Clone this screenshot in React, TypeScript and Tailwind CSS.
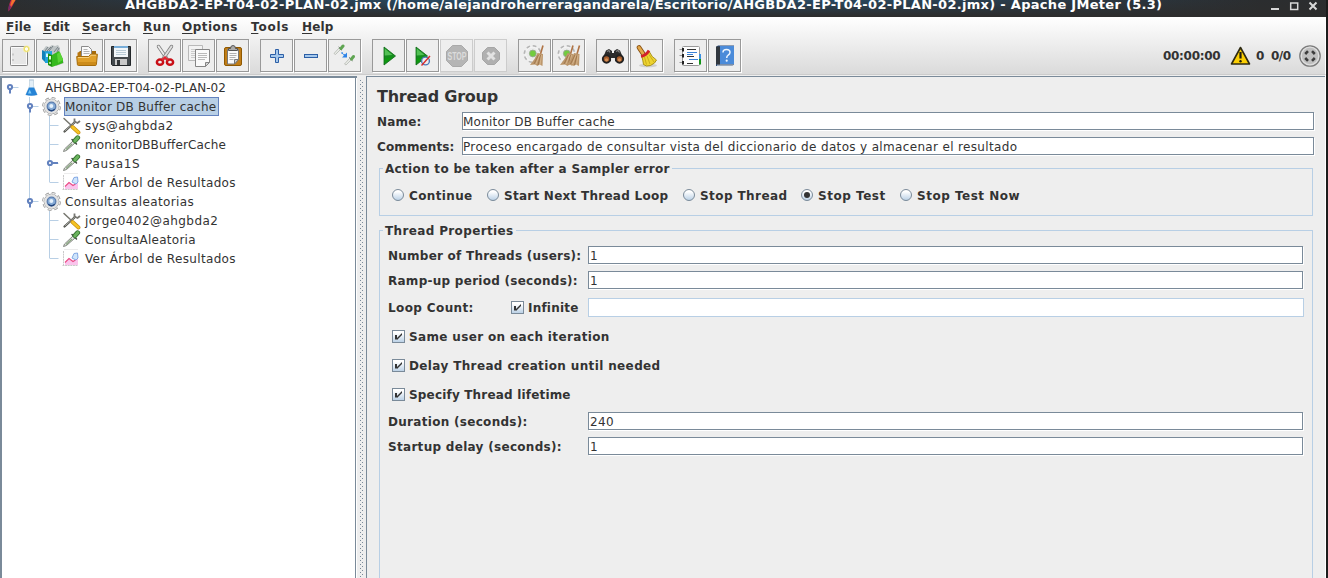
import React, { ReactNode } from "react";

/* ---------- toolbar icons (24 x 24) ---------- */

const Svg = ({ children }: { children: ReactNode }) => (
  <svg width="24" height="24" viewBox="0 0 24 24" className="block shrink-0">{children}</svg>
);

const NewIcon = () => (
  <Svg>
    <rect x="3.500" y="2.500" width="17" height="19" rx="0.800" fill="#ededed" stroke="#858585" />
    <rect x="4.500" y="3.500" width="15" height="17" fill="#e6e6e6" stroke="#fafafa" />
    <path d="M6 9.500v2M6 15v2" stroke="#aaa" />
    <circle cx="19.500" cy="5" r="3.600" fill="#f7ee9d" opacity="0.800" />
    <circle cx="19.500" cy="5" r="2.300" fill="#fffdf0" stroke="#eadc52" />
  </Svg>
);

const TemplatesIcon = () => (
  <Svg>
    <path d="M13 19l9-2 1 2-8 3z" fill="#b5b5b5" />
    <path d="M2 6l3-4 3 1 3-2 3 1 3-1 2 3v7l-9 5-8-4z" fill="#bfc5c6" />
    <path d="M4 7l3-4M8 7l4-5M13 8l4-5M6 7l4-4M16 8l2-4" stroke="#707b80" strokeWidth="0.900" />
    <path d="M1 6l3 1.500L7 7v12l-3-1-3-3z" fill="#1280b8" />
    <path d="M4 7.500L11 7v12H4z" fill="#21a3dc" />
    <path d="M7 9.500l4 1.500v12l-4-2z" fill="#1f930f" />
    <path d="M11 11l7-4 4 8v4l-11 4z" fill="#35b91d" />
    <path d="M16 10l3-2 3 8-5 3z" fill="#59d435" />
    <rect x="5" y="9.500" width="2" height="3.500" fill="#d8f5ff" />
    <rect x="8" y="12" width="2" height="3.500" fill="#d9ffd0" />
    <circle cx="9" cy="19" r="0.900" fill="#e2ffdc" />
  </Svg>
);

const OpenIcon = () => (
  <Svg>
    <path d="M3 9l2-2h16v6H3z" fill="#a66b0a" />
    <path d="M2.500 8.500h4l1-2h3v14h-8z" fill="#b9770f" />
    <path d="M6.500 2.500h7l3 3v9h-10z" fill="#fafafa" stroke="#8a8a8a" />
    <path d="M8.500 5.500h4M8.500 7.500h6M8.500 9.500h6" stroke="#b3b3b3" />
    <path d="M1.700 12.500h12l2-2.300h6.700l-1 10.300q-.1 1-1.200 1H3.500q-1 0-1.100-1z" fill="#e0a02a" stroke="#a56c0c" />
    <path d="M3 13.500h11l2-2.300h5" fill="none" stroke="#f7d07d" />
    <path d="M2.700 18h18.500l-.4 3H3z" fill="#c17f13" opacity="0.650" />
  </Svg>
);

const SaveIcon = () => (
  <Svg>
    <path d="M2.500 2.500h19v19h-18l-1-1z" fill="#444a4e" stroke="#222629" />
    <rect x="5" y="2" width="14" height="11" fill="#f2f7fa" />
    <rect x="5" y="2" width="14" height="2" fill="#79aed9" />
    <path d="M7 6.500h10M7 8.500h10M7 10.500h10" stroke="#b9cbd6" />
    <rect x="6" y="15" width="12" height="6" fill="#c9c9c9" />
    <rect x="8" y="16" width="3" height="5" fill="#33373a" />
  </Svg>
);

const CutIcon = () => (
  <Svg>
    <path d="M5.500 2.500L14 15" stroke="#7d7d7d" strokeWidth="3.400" strokeLinecap="round" />
    <path d="M5.500 2.500L14 15" stroke="#ececec" strokeWidth="1.900" strokeLinecap="round" />
    <path d="M18.500 2.500L10 15" stroke="#7d7d7d" strokeWidth="3.400" strokeLinecap="round" />
    <path d="M18.500 2.500L10 15" stroke="#dedede" strokeWidth="1.900" strokeLinecap="round" />
    <ellipse cx="7" cy="18.200" rx="3.100" ry="2.600" fill="none" stroke="#c90f17" strokeWidth="2.500" />
    <ellipse cx="17" cy="18.200" rx="3.100" ry="2.600" fill="none" stroke="#c90f17" strokeWidth="2.500" />
    <path d="M9 16l3-2.500 3 2.500" fill="none" stroke="#df2731" strokeWidth="2.300" />
  </Svg>
);

const CopyIcon = () => (
  <Svg>
    <path d="M1.500 1.500h14v15h-14z" fill="#f3f3f3" stroke="#b9b9b9" />
    <path d="M4 5.500h9M4 7.500h9M4 9.500h4M4 11.500h4M4 13.500h4" stroke="#ccc" />
    <path d="M8.500 5.500h14v13l-4 4h-10z" fill="#fafafa" stroke="#858585" />
    <path d="M11 9.500h9M11 11.500h9M11 13.500h9M11 15.500h7" stroke="#b9b9b9" />
    <path d="M22.500 18.500h-4v4z" fill="#d4d4d4" stroke="#858585" />
  </Svg>
);

const PasteIcon = () => (
  <Svg>
    <rect x="3.500" y="3.500" width="17" height="18" rx="1.500" fill="#c17d16" stroke="#8f5902" />
    <path d="M6.500 5.500h11v10l-4 4.500h-7z" fill="#fafafa" stroke="#777" />
    <path d="M17.500 15.500h-4v4.500z" fill="#ccc" stroke="#777" />
    <path d="M8.500 9.500h7M8.500 11.500h7M8.500 13.500h6M8.500 15.500h4" stroke="#b0b0b0" />
    <path d="M7.500 6.500v-2h2q0-3 2.500-3t2.500 3h2v2z" fill="#aaa" stroke="#555" />
  </Svg>
);

const PlusIcon = () => (
  <Svg>
    <path d="M10.500 5.500h3v5h5v3h-5v5h-3v-5h-5v-3h5z" fill="#a5c8ec" stroke="#2c5fa6" strokeLinejoin="round" />
  </Svg>
);

const MinusIcon = () => (
  <Svg>
    <rect x="5.500" y="10.500" width="13" height="3" fill="#a5c8ec" stroke="#2c5fa6" />
  </Svg>
);

const Dropper = ({ x, y }: { x: number; y: number }) => (
  <g transform={`translate(${x} ${y})`}>
    <path d="M1 9.500l5-5.500 1.500 1.500-5 5z" fill="#e9ebe7" stroke="#b4b7b1" strokeWidth="0.800" />
    <path d="M5.700 3L9 6.300" stroke="#4d5a4d" strokeWidth="1" />
    <path d="M8 4.500l2-2.500" stroke="#5fa552" strokeWidth="3" strokeLinecap="round" />
  </g>
);

const ToggleIcon = () => (
  <Svg>
    <Dropper x={0} y={0} />
    <Dropper x={10.500} y={10.500} />
    <path d="M8.500 8.500l4 3.500" stroke="#2d83e8" strokeWidth="1.500" strokeDasharray="1.800 .8" />
    <path d="M14 8.500v5h-5z" fill="#2d83e8" />
  </Svg>
);

const Play = () => (
  <>
    <path d="M7 3v18l11.500-9z" fill="#168c1f" stroke="#0d6a14" strokeWidth="0.800" />
    <path d="M7.700 4.500v7l7.800-.5z" fill="#52c054" />
    <path d="M7.700 19.500l9-7.300-9 2.500z" fill="#0f9a10" />
  </>
);

const StartIcon = () => <Svg><Play /></Svg>;

const StartNoTimersIcon = () => (
  <Svg>
    <g transform="translate(-2 0)"><Play /></g>
    <circle cx="14.500" cy="17" r="3.900" fill="#eee" stroke="#4b79ba" strokeWidth="1.400" />
    <path d="M10.500 21.500l8.500-9.500" stroke="#d92c2c" strokeWidth="1.400" />
  </Svg>
);

const StopIcon = () => (
  <Svg>
    <path d="M7.500 1.500h9l6 6v9l-6 6h-9l-6-6v-9z" fill="#b5b5b5" stroke="#a9a9a9" />
    <text x="12" y="15.500" textAnchor="middle" textLength="19" lengthAdjust="spacingAndGlyphs" fontFamily="Liberation Sans" fontWeight="bold" fontSize="10" fill="#dcdcdc">STOP</text>
  </Svg>
);

const ShutdownIcon = () => (
  <Svg>
    <path d="M8.500 3.500h7l5 5v7l-5 5h-7l-5-5v-7z" fill="#b0b0b0" stroke="#a6a6a6" />
    <path d="M8.500 8.500l7 7M15.500 8.500l-7 7" stroke="#e2e2e2" strokeWidth="3" />
  </Svg>
);

const Cog = () => (
  <>
    <circle cx="9.500" cy="10" r="7.300" fill="none" stroke="#b5b5b5" strokeWidth="3.400" strokeDasharray="3.300 2.434" />
    <circle cx="9.500" cy="10" r="6.800" fill="#ececec" stroke="#f4f4f4" strokeWidth="1.200" />
    <circle cx="9.800" cy="9.500" r="3.400" fill="#72cc3e" stroke="#9aa894" strokeWidth="0.900" />
  </>
);

const Broom = ({ x = 0 }: { x?: number }) => (
  <g transform={`translate(${x} 0)`}>
    <path d="M20 1.500L17.500 10" stroke="#b07446" strokeWidth="1.600" />
    <path d="M14.500 9l5.500 1-.5 12-3-1.500-2 1.500-2.500-1.500-5 .5q5-5.500 7.500-12z" fill="#bc976c" />
    <path d="M15.500 11l-4.500 9M17.500 11l-2.500 10" stroke="#94693e" strokeWidth="0.700" />
    <path d="M16.500 11l-3.500 9M18.500 11l-1.500 10" stroke="#dfbf96" strokeWidth="0.700" />
  </g>
);

const ClearIcon = () => <Svg><Cog /><Broom /></Svg>;
const ClearAllIcon = () => <Svg><Cog /><Broom x={-4} /><Broom x={2.500} /></Svg>;

const SearchIcon = () => (
  <Svg>
    <path d="M5 6.500l3-1.500 3 2v2h2V7l3-2 3 1.500 3.500 8.500-4.500 4-4-2v-3h-4v3l-4 2-4.500-4z" fill="#2b2b2b" />
    <path d="M6 7.500l2-1 1 2M15 7.500l2-1 1.500 2" stroke="#858585" strokeWidth="1.200" fill="none" />
    <circle cx="5.500" cy="15" r="3.700" fill="#a65b2a" stroke="#222" strokeWidth="1.900" />
    <circle cx="18.500" cy="15" r="3.700" fill="#a65b2a" stroke="#222" strokeWidth="1.900" />
    <circle cx="5.500" cy="15.800" r="1.600" fill="#d39159" />
    <circle cx="18.500" cy="15.800" r="1.600" fill="#d39159" />
  </Svg>
);

const ResetSearchIcon = () => (
  <Svg>
    <ellipse cx="13" cy="21.500" rx="9" ry="1.800" fill="#cfcfcf" />
    <path d="M4 3.500l4 6" stroke="#8a5212" strokeWidth="4.800" strokeLinecap="round" />
    <path d="M4 3.500l4 6" stroke="#e3a84a" strokeWidth="3" strokeLinecap="round" />
    <path d="M7 13l7.500-5q2 5 7 8l-2 3-4 2.500-4 .5-3-1.500Q8 17 7 13z" fill="#edd32f" stroke="#a38a0d" strokeWidth="0.900" />
    <path d="M9.500 13l2 7.500M12 12l3 8M14 10.500l5 7.500" stroke="#c4a81a" strokeWidth="0.900" />
    <path d="M6 12.500q5-1 8-6" fill="none" stroke="#d3202a" strokeWidth="2.800" />
  </Svg>
);

const FunctionIcon = () => (
  <Svg>
    <rect x="3.500" y="2.500" width="17" height="19" rx="1" fill="#fdfdfd" stroke="#9a9a9a" />
    <rect x="20" y="10" width="2" height="5" fill="#3b8fe0" />
    <rect x="20" y="15" width="2" height="5.500" fill="#129318" />
    <path d="M8 5.500h9M8 12.500h7M8 19.500h6" stroke="#333" />
    <path d="M8 8.500h10M10 15.500h9M8 10.500h6" stroke="#3982d8" />
    {[5, 11, 18].map((y) => (
      <g key={y}>
        <path d={`M0.500 ${y + 0.500}h3`} stroke="#999" />
        <rect x="3" y={y - 1} width="2" height="3.500" fill="#222" />
      </g>
    ))}
  </Svg>
);

const HelpIcon = () => (
  <Svg>
    <path d="M3 3l2-1.500h16v18.500l-1.500 2H3z" fill="#2a4a78" />
    <path d="M4 20.500h16v1.200H4z" fill="#cfd4da" />
    <rect x="7" y="2" width="14" height="18" fill="#4b8bd9" />
    <rect x="3" y="2.500" width="4" height="18" fill="#30363e" />
    <path d="M10 8.500q0-3 3.500-3t3.500 2.800q0 1.700-1.700 2.700-1.600 1.100-1.600 3" fill="none" stroke="#eef6ff" strokeWidth="1.500" />
    <circle cx="13.700" cy="16.700" r="1.100" fill="#eef6ff" />
  </Svg>
);

/* ---------- tree icons (20 x 19) ---------- */

type NodeKind = "plan" | "threads" | "config" | "sampler" | "listener";

const NodeIcon = ({ kind }: { kind: NodeKind }) => (
  <svg width="20" height="19" viewBox="0 0 20 19" className="block shrink-0">
    {kind === "plan" && (
      <>
        <path d="M5.500 2v6L1.800 17h11.400L9.500 8V2z" fill="#e3eff8" stroke="#c3d3df" strokeWidth="0.800" />
        <path d="M5 9.500h5l3.300 7.300q-5.800 2-11.600 0z" fill="#2583d6" />
        <path d="M5.700 11.500L4 15.500h3.500z" fill="#7cc9f7" />
        <path d="M5 2h5" stroke="#b9cfdf" />
      </>
    )}
    {kind === "threads" && (
      <>
        <circle cx="9.500" cy="9.500" r="8.200" fill="none" stroke="#9a9a9a" strokeWidth="2.400" strokeDasharray="3.600 2.840" />
        <circle cx="9.500" cy="9.500" r="7.400" fill="none" stroke="#a9a9a9" strokeWidth="1" />
        <circle cx="9.500" cy="9.500" r="8" fill="none" stroke="#e6e6e6" strokeWidth="1.400" strokeDasharray="2.600 3.683" strokeDashoffset="-0.500" />
        <circle cx="9.500" cy="9.500" r="7" fill="#e2e2e2" />
        <circle cx="9.500" cy="9.500" r="4.300" fill="#86abd6" stroke="#5b7dae" strokeWidth="1.300" />
        <path d="M6.300 12.300q3.200 3 6.400 0" fill="none" stroke="#23457c" strokeWidth="1.300" />
        <circle cx="9.300" cy="9" r="2" fill="#e6f1fb" />
      </>
    )}
    {kind === "config" && (
      <>
        <path d="M2.500 15.500L13 6" stroke="#4f504a" strokeWidth="2.200" strokeLinecap="round" />
        <path d="M2.800 15L13 6" stroke="#b4b6ae" strokeWidth="0.900" />
        <path d="M12.500 2.500v3l3 1.500 2.500-2" fill="none" stroke="#777772" strokeWidth="1.800" />
        <path d="M2 2.500l8 7.500" stroke="#77776f" strokeWidth="1.500" strokeLinecap="round" />
        <path d="M10.500 11l6 5.500" stroke="#c48c10" strokeWidth="3.800" strokeLinecap="round" />
        <path d="M10.500 11l6 5.500" stroke="#f5c322" strokeWidth="2.500" strokeLinecap="round" />
      </>
    )}
    {kind === "sampler" && (
      <>
        <path d="M1.500 16.500l1-2.500L11 6l2 2-8.500 7.500z" fill="#e4e7e2" stroke="#767b74" strokeWidth="0.900" />
        <path d="M4 14.500l6-5.500" stroke="#86a57e" strokeWidth="1.100" />
        <path d="M10 4.500l4.500 4.500" stroke="#3b473b" strokeWidth="1.400" strokeLinecap="round" />
        <path d="M13 5.700l2.700-3" stroke="#35702f" strokeWidth="4.800" strokeLinecap="round" />
        <path d="M13 5.700l2.700-3" stroke="#6ab35d" strokeWidth="3.200" strokeLinecap="round" />
      </>
    )}
    {kind === "listener" && (
      <>
        <path d="M1.500 2v15M.500 16.500H16" stroke="#c9c9c9" strokeDasharray="2 .6" />
        <path d="M2 .5h14" stroke="#ececec" />
        <path d="M3 16v-3l4-4 4 3 5-3v7z" fill="#fac4ec" />
        <path d="M3 13.500l4-4 4 3 2.500-1.500" fill="none" stroke="#ea4d86" strokeWidth="1.100" />
        <path d="M10 9l2-4.500 3.500-.5.500 5-2 2z" fill="#cfe5fb" stroke="#83a8e4" strokeWidth="1" />
      </>
    )}
  </svg>
);

/* ---------- tree ---------- */

type TreeNode = {
  depth: 0 | 1 | 2;
  kind: NodeKind;
  label: string;
  tracking: string;
  handle?: "open" | "closed";
  trunk?: boolean;
  last?: boolean;
  selected?: boolean;
};

const nodes: TreeNode[] = [
  { depth: 0, kind: "plan", label: "AHGBDA2-EP-T04-02-PLAN-02", tracking: "tracking-[0.07px]", handle: "open" },
  { depth: 1, kind: "threads", label: "Monitor DB Buffer cache", tracking: "tracking-[0.2px]", handle: "open", selected: true },
  { depth: 2, kind: "config", label: "sys@ahgbda2", tracking: "tracking-[0.383px]", trunk: true },
  { depth: 2, kind: "sampler", label: "monitorDBBufferCache", tracking: "tracking-[0.133px]", trunk: true },
  { depth: 2, kind: "sampler", label: "Pausa1S", tracking: "tracking-[0.684px]", trunk: true, handle: "closed" },
  { depth: 2, kind: "listener", label: "Ver Árbol de Resultados", tracking: "tracking-[0.338px]", trunk: true, last: true },
  { depth: 1, kind: "threads", label: "Consultas aleatorias", tracking: "tracking-[0.35px]", handle: "open", last: true },
  { depth: 2, kind: "config", label: "jorge0402@ahgbda2", tracking: "tracking-[0.45px]" },
  { depth: 2, kind: "sampler", label: "ConsultaAleatoria", tracking: "tracking-[0.25px]" },
  { depth: 2, kind: "listener", label: "Ver Árbol de Resultados", tracking: "tracking-[0.338px]", last: true },
];

const Guides = ({ node }: { node: TreeNode }) => {
  const width = [22, 40, 60][node.depth];
  const x = [7, 27, 47][node.depth];
  return (
    <svg width={width} height="19" viewBox={`0 0 ${width} 19`} className="block shrink-0">
      <g stroke="#b8cfe5" fill="none">
        {node.depth === 1 && <path d={`M27.500 0V${node.last ? 9 : 19}`} />}
        {node.trunk && <path d="M27.500 0v19" />}
        {node.depth === 2 && <path d={`M47.500 0V${node.last ? 9 : 19}`} />}
        <path d={`M${x + 0.500} 9.500h9`} />
      </g>
      {node.handle && (
        <g stroke="#6382bf" strokeWidth="2" fill="none">
          <circle cx={x + 1} cy="9" r="2.100" fill="#fff" />
          {node.handle === "open" ? <path d={`M${x + 1} 11.500v4`} /> : <path d={`M${x + 3} 9h6`} />}
        </g>
      )}
    </svg>
  );
};

const Tree = () => (
  <div className="w-[357px] shrink-0 border-l-2 border-t-2 border-[#7a8a99] bg-white">
    <div className="h-full w-[354px] border-r border-[#7a8a99]">
      {nodes.map((n, i) => (
        <div key={i} className="flex h-[19px]">
          <Guides node={n} />
          <NodeIcon kind={n.kind} />
          <div
            className={
              n.selected
                ? "ml-[2px] h-[19px] w-[155px] border border-[#6382bf] bg-[#b8cfe5] pt-[2px]"
                : n.depth === 0 ? "ml-px pt-[3px]" : "ml-[3px] pt-[3px]"
            }
          >
            <div className={`whitespace-nowrap leading-[14px] ${n.tracking}`}>{n.label}</div>
          </div>
        </div>
      ))}
    </div>
  </div>
);

/* ---------- window chrome ---------- */

const TitleBar = () => (
  <header className="flex h-[17px] shrink-0 bg-[linear-gradient(180deg,transparent_0%,#2d2d2d_95%),linear-gradient(90deg,#2b2d2f_0%,#294a63_35%,#294a63_60%,#2b2d2f_95%)]">
    <svg width="125" height="17" viewBox="0 0 125 17" className="block shrink-0">
      <path d="M15.500 0Q13 6 8.500 11.500 8 6 11 0z" fill="#d22b4a" />
      <path d="M15.500 0Q12 5 9.500 8.500L12 0z" fill="#f0782b" />
      <path d="M8.500 11.500Q8 8 9.500 4L11 7z" fill="#6e2a6e" />
    </svg>
    <div className="whitespace-nowrap text-[13px] font-bold leading-[10px] tracking-[0.295px] text-white">
      AHGBDA2-EP-T04-02-PLAN-02.jmx (/home/alejandroherreragandarela/Escritorio/AHGBDA2-EP-T04-02-PLAN-02.jmx) - Apache JMeter (5.3)
    </div>
    <svg width="54" height="17" viewBox="0 0 54 17" className="ml-auto mr-px block shrink-0">
      <path d="M0 9h8" stroke="#d8d8d8" strokeWidth="2" />
      <path d="M19.700 3h7v6.500h-7z" fill="none" stroke="#d8d8d8" strokeWidth="1.500" />
      <path d="M38.500 2.500l7 7M45.500 2.500l-7 7" stroke="#d8d8d8" strokeWidth="2" />
    </svg>
  </header>
);

const menus = [
  ["File", "w-[37px] tracking-[0.192px]"],
  ["Edit", "w-[39px] tracking-[0.033px]"],
  ["Search", "w-[61px] tracking-[0.458px]"],
  ["Run", "w-[39px] tracking-[0.6px]"],
  ["Options", "w-[69px] tracking-[0.462px]"],
  ["Tools", "w-[51px] tracking-[0.777px]"],
  ["Help", "w-[40px] tracking-[0.135px]"],
];

const MenuBar = () => (
  <nav className="flex h-[22px] pl-[6px] pt-[3px] font-bold leading-[14px]">
    {menus.map(([label, cls]) => (
      <div key={label} className={cls}>
        <span className="underline decoration-1 underline-offset-[2px]">{label[0]}</span>
        {label.slice(1)}
      </div>
    ))}
  </nav>
);

const toolGroups: { icon: ReactNode; disabled?: boolean }[][] = [
  [{ icon: <NewIcon /> }, { icon: <TemplatesIcon /> }, { icon: <OpenIcon /> }, { icon: <SaveIcon /> }],
  [{ icon: <CutIcon /> }, { icon: <CopyIcon /> }, { icon: <PasteIcon /> }],
  [{ icon: <PlusIcon /> }, { icon: <MinusIcon /> }, { icon: <ToggleIcon /> }],
  [{ icon: <StartIcon /> }, { icon: <StartNoTimersIcon /> }, { icon: <StopIcon />, disabled: true }, { icon: <ShutdownIcon />, disabled: true }],
  [{ icon: <ClearIcon /> }, { icon: <ClearAllIcon /> }],
  [{ icon: <SearchIcon /> }, { icon: <ResetSearchIcon /> }],
  [{ icon: <FunctionIcon /> }, { icon: <HelpIcon /> }],
];

const ToolBar = () => (
  <div className="flex h-[36px] items-start pl-[2px]">
    <div className="flex gap-[11px]">
      {toolGroups.map((group, i) => (
        <div key={i} className="flex gap-px">
          {group.map((tool, j) => (
            <button
              key={j}
              className={`flex h-[33px] w-[33px] items-start justify-start border bg-[#eeeeee] pl-[4px] pt-[4px] ${
                tool.disabled ? "border-[#cccccc]" : "border-[#999999] shadow-[1px_1px_0_#fff]"
              }`}
            >
              {tool.icon}
            </button>
          ))}
        </div>
      ))}
    </div>
    <div className="ml-auto flex h-[34px] w-[162px] items-center font-bold">
      <div className="w-[67px] tracking-[-0.292px]">00:00:00</div>
      <svg width="21" height="20" viewBox="0 0 21 20" className="block shrink-0">
        <path d="M10.500 1.500L19.500 18H1.500z" fill="#fccf03" stroke="#2e2a12" strokeWidth="1.600" strokeLinejoin="round" />
        <path d="M10.500 6v6.500" stroke="#221e0c" strokeWidth="2.200" />
        <circle cx="10.500" cy="15.300" r="1.200" fill="#221e0c" />
      </svg>
      <div className="ml-[5px] w-[15px]">0</div>
      <div className="w-[28px] tracking-[-0.5px]">0/0</div>
      <svg width="22" height="22" viewBox="0 0 22 22" className="block shrink-0">
        <circle cx="11" cy="11" r="10.200" fill="#a9a9a9" stroke="#7b7b7b" strokeWidth="1.300" />
        <circle cx="11" cy="11" r="8.800" fill="#bfbfbf" stroke="#dedede" strokeWidth="1.300" />
        <path d="M9 6.200L6.200 9M13 6.200L15.800 9M9 15.800L6.200 13M13 15.800l2.800-2.800" stroke="#3c3c3c" strokeWidth="2.600" />
      </svg>
    </div>
  </div>
);

/* ---------- form controls ---------- */

const Field = ({ value, tracking = "", className = "" }: { value: string; tracking?: string; className?: string }) => (
  <div className={`h-[18px] border border-[#7a8a99] bg-white pt-[2px] leading-[14px] shadow-[1px_1px_0_#fff] ${tracking} ${className}`}>{value}</div>
);

const Check = () => (
  <svg width="13" height="13" viewBox="0 0 13 13" className="block shrink-0">
    <defs>
      <linearGradient id="box" x1="0" y1="0" x2="0" y2="1">
        <stop offset="0.200" stopColor="#fff" />
        <stop offset="1" stopColor="#b8cfe5" />
      </linearGradient>
    </defs>
    <rect x="0.500" y="0.500" width="12" height="12" fill="url(#box)" stroke="#7a8a99" />
    <path d="M3 5h2v2.500h1V6.500h1v-1h1v-1h1v-1h1v2H9v1H8v1H7v1H6v1H3z" fill="#333" />
  </svg>
);

const Radio = ({ checked }: { checked?: boolean }) => (
  <svg width="12" height="12" viewBox="0 0 12 12" className="block shrink-0">
    <circle cx="6" cy="6" r="5.500" fill="url(#box)" stroke="#7a8a99" />
    {checked && <circle cx="6" cy="6" r="3" fill="#333" />}
  </svg>
);

const radios = [
  { label: "Continue", cls: "w-[95px] tracking-[0.37px]" },
  { label: "Start Next Thread Loop", cls: "w-[196px] tracking-[0.26px]" },
  { label: "Stop Thread", cls: "w-[118px] tracking-[0.423px]" },
  { label: "Stop Test", cls: "w-[99px] tracking-[0.53px]", checked: true },
  { label: "Stop Test Now", cls: "w-[140px] tracking-[0.503px]" },
];

const checks = [
  ["Same user on each iteration", "tracking-[0.353px]"],
  ["Delay Thread creation until needed", "tracking-[0.368px]"],
  ["Specify Thread lifetime", "tracking-[0.18px]"],
];

/* Titled group: the top border runs on either side of the caption. */
const Group = ({ title, titleClass, className, children }: { title: string; titleClass: string; className: string; children: ReactNode }) => (
  <section className={`flex flex-col ${className}`}>
    <div className="flex h-[14px] shrink-0">
      <div className="mt-[7px] w-[4px] border-l border-t border-[#b8cfe5]" />
      <div className={`shrink-0 whitespace-nowrap pl-[2px] pt-px font-bold leading-[14px] ${titleClass}`}>{title}</div>
      <div className="mt-[7px] flex-1 border-r border-t border-[#b8cfe5]" />
    </div>
    <div className="flex-1 border-x border-b border-[#b8cfe5]">{children}</div>
  </section>
);

const LabeledField = ({ label, tracking, value, className }: { label: string; tracking: string; value: string; className: string }) => (
  <div className={`flex h-[18px] ${className}`}>
    <div className={`w-[200px] shrink-0 whitespace-nowrap pt-[3px] font-bold leading-[14px] ${tracking}`}>{label}</div>
    <Field value={value} tracking="tracking-[0.365px] pl-px" className="flex-1" />
  </div>
);

const ThreadGroupPanel = () => (
  <main className="mt-px flex min-w-0 flex-1 flex-col border-l border-t border-[#7a8a99]">
    <h1 className="ml-[10px] mt-[10px] h-[25px] text-[16px] font-bold leading-[19px] tracking-[-0.234px]">Thread Group</h1>
    <div className="ml-[10px] mr-[11px] flex h-[18px]">
      <div className="w-[85px] shrink-0 pt-[3px] font-bold leading-[14px] tracking-[0.204px]">Name:</div>
      <Field value="Monitor DB Buffer cache" tracking="tracking-[0.231px]" className="flex-1" />
    </div>
    <div className="ml-[10px] mr-[11px] mt-[7px] flex h-[18px]">
      <div className="w-[85px] shrink-0 pt-[3px] font-bold leading-[14px] tracking-[0.123px]">Comments:</div>
      <Field value="Proceso encargado de consultar vista del diccionario de datos y almacenar el resultado" tracking="tracking-[0.34px]" className="flex-1" />
    </div>

    <Group title="Action to be taken after a Sampler error" titleClass="w-[289px] tracking-[0.305px]" className="ml-[12px] mr-[12px] mt-[6px] h-[55px]">
      <div className="flex pl-[12px] pt-[14px]">
        {radios.map((r) => (
          <div key={r.label} className={`flex h-[14px] gap-[5px] whitespace-nowrap font-bold leading-[14px] ${r.cls}`}>
            <Radio checked={r.checked} />
            {r.label}
          </div>
        ))}
      </div>
    </Group>

    <Group title="Thread Properties" titleClass="w-[133px] tracking-[0.36px]" className="mb-[-4px] ml-[12px] mr-[12px] mt-[7px] flex-1">
      <div className="pl-[8px] pr-[9px] pt-[9px]">
        <LabeledField label="Number of Threads (users):" tracking="tracking-[0.244px]" value="1" className="" />
        <LabeledField label="Ramp-up period (seconds):" tracking="tracking-[0.268px]" value="1" className="mt-[7px]" />
        <div className="mr-[-1px] mt-[9px] flex h-[19px] font-bold leading-[14px]">
          <div className="w-[123px] pt-[3px] tracking-[0.382px]">Loop Count:</div>
          <div className="flex w-[77px] gap-[4px] pt-[3px] tracking-[0.215px]"><Check />Infinite</div>
          <div className="flex-1 border border-[#b8cfe5] bg-white" />
        </div>
        <div className="mt-[13px] flex flex-col gap-[15px] pl-[4px]">
          {checks.map(([label, tracking]) => (
            <div key={label} className={`flex h-[14px] gap-[4px] font-bold leading-[14px] ${tracking}`}><Check />{label}</div>
          ))}
        </div>
        <LabeledField label="Duration (seconds):" tracking="tracking-[0.299px]" value="240" className="mt-[10px]" />
        <LabeledField label="Startup delay (seconds):" tracking="tracking-[0.3px]" value="1" className="mt-[7px]" />
      </div>
    </Group>
  </main>
);

const Divider = () => (
  <div className="flex w-[9px] shrink-0 justify-center bg-[#eeeeee] pt-[5px]">
    <div className="w-[4px] bg-[radial-gradient(circle_at_0.5px_0.5px,#7a8a99_0.6px,transparent_0.7px),radial-gradient(circle_at_2.5px_2.5px,#7a8a99_0.6px,transparent_0.7px)] bg-[length:4px_4px]" />
  </div>
);

export default function App() {
  return (
    <div className="flex h-[578px] w-[1328px] overflow-hidden bg-[#1c1c1c] font-['DejaVu_Sans',sans-serif] text-[12px] text-[#333333]">
      <div className="flex w-[1326px] flex-col bg-[#eeeeee]">
        <TitleBar />
        <div className="h-[58px] shrink-0 border-b border-r border-b-[#cccccc] border-r-white bg-[linear-gradient(180deg,#ffffff,#dadada)]">
          <MenuBar />
          <ToolBar />
        </div>
        <div className="flex min-h-0 flex-1 border-r border-white">
          <div className="flex pt-px"><Tree /></div>
          <Divider />
          <ThreadGroupPanel />
        </div>
      </div>
    </div>
  );
}
